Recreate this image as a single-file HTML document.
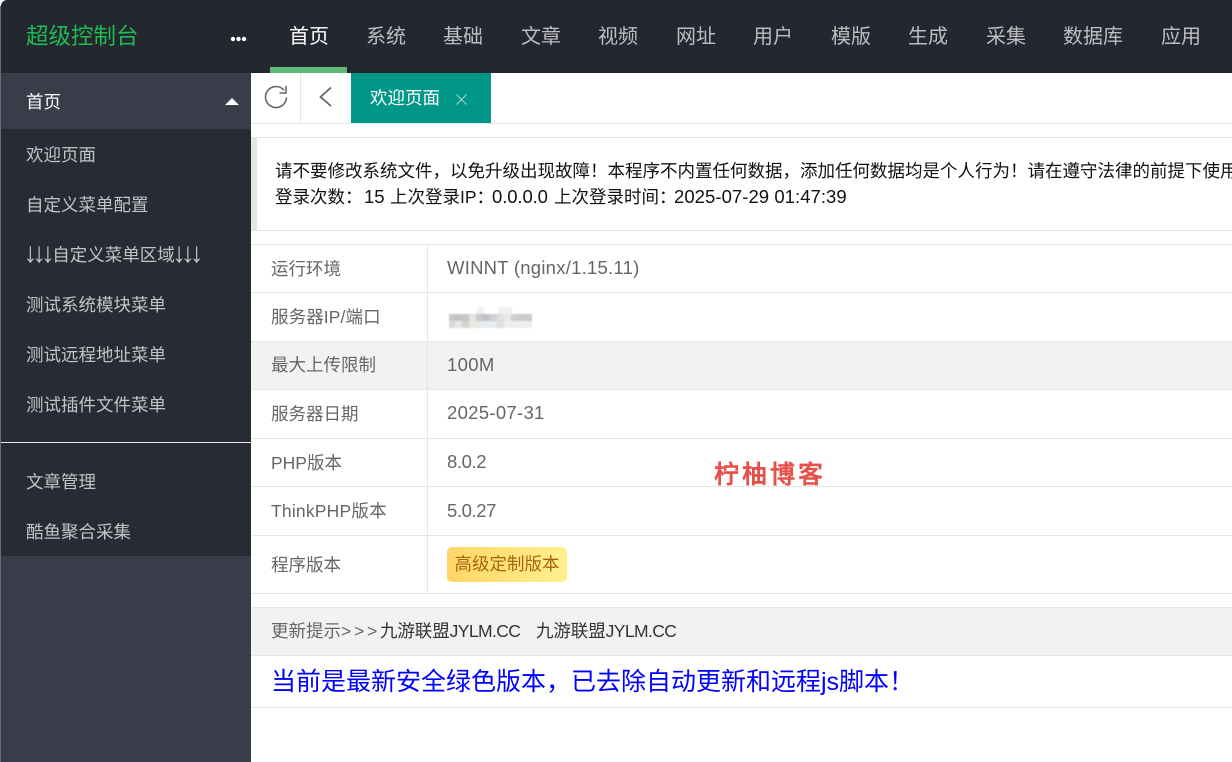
<!DOCTYPE html>
<html lang="zh-CN"><head><meta charset="utf-8"><title>超级控制台</title>
<style>
html,body{margin:0;padding:0;background:#fff}
body{width:1232px;height:762px;overflow:hidden;position:relative;font-family:"Liberation Sans","Noto Sans CJK SC",sans-serif}
.a{position:absolute;white-space:nowrap}
.top{left:1px;top:0;width:1231px;height:73px;background:#252730;border-top-left-radius:6px}
.edge{left:0;top:6px;width:1px;height:756px;background:#6b6d75}
.n{top:0;height:73px;line-height:75px;font-size:20px;color:#bdbec1}
.side{left:1px;top:73px;width:250px;height:689px;background:#393d49}
.sdark{left:1px;top:129px;width:250px;height:427px;background:#282b33}
.s{left:26px;font-size:17.5px;line-height:24px;color:#c2c3c5}
.ar{font-size:28px;line-height:0;letter-spacing:-5.25px;position:relative;left:-2.6px;top:1px}
.h{left:251px;width:981px;height:1px;background:#e6e6e6}
.v{left:427px;width:1px;background:#e6e6e6}
.l{left:271px;font-size:17.5px;line-height:24px;color:#666}
.r{left:447px;font-size:18.5px;line-height:24px;color:#666}
.w{font-size:17.5px;line-height:26px;color:#111}
.d{font-size:18.5px}
</style></head><body>
<div class="a top"></div><div class="a edge"></div>
<div class="a" style="left:26px;top:21px;font-size:22.5px;line-height:32px;color:#1dbb52">超级控制台</div>
<svg class="a" style="left:230px;top:36px" width="17" height="6"><circle cx="3" cy="3" r="2.2" fill="#fff"/><circle cx="8.5" cy="3" r="2.2" fill="#fff"/><circle cx="14" cy="3" r="2.2" fill="#fff"/></svg>
<div class="a n" style="left:289px;color:#fff">首页</div>
<div class="a" style="left:270px;top:67px;width:77px;height:6px;background:#5fb878"></div>
<div class="a n" style="left:366px">系统</div>
<div class="a n" style="left:443px">基础</div>
<div class="a n" style="left:521px">文章</div>
<div class="a n" style="left:598px">视频</div>
<div class="a n" style="left:676px">网址</div>
<div class="a n" style="left:753px">用户</div>
<div class="a n" style="left:831px">模版</div>
<div class="a n" style="left:908px">生成</div>
<div class="a n" style="left:986px">采集</div>
<div class="a n" style="left:1063px">数据库</div>
<div class="a n" style="left:1161px">应用</div>

<div class="a side"></div><div class="a sdark"></div>
<div class="a s" style="top:90px;color:#fff">首页</div>
<svg class="a" style="left:225px;top:98px" width="14" height="7"><path d="M0 7L7 0L14 7Z" fill="#fff"/></svg>
<div class="a s" style="top:143px">欢迎页面</div>
<div class="a s" style="top:193px">自定义菜单配置</div>
<div class="a s" style="top:243px"><span class="ar">↓↓↓</span>自定义菜单区域<span class="ar">↓↓↓</span></div>
<div class="a s" style="top:293px">测试系统模块菜单</div>
<div class="a s" style="top:343px">测试远程地址菜单</div>
<div class="a s" style="top:393px">测试插件文件菜单</div>
<div class="a" style="left:1px;top:442px;width:250px;height:1px;background:#e8e8e8"></div>
<div class="a s" style="top:470px">文章管理</div>
<div class="a s" style="top:520px">酷鱼聚合采集</div>

<div class="a h" style="top:123px"></div>
<div class="a" style="left:300px;top:73px;width:1px;height:50px;background:#e6e6e6"></div>
<svg class="a" style="left:263px;top:84px" width="26" height="26" fill="none" stroke="#666" stroke-width="1.6"><path d="M21 6.2A10.5 10.5 0 1 0 23.5 13.5"/><path d="M23 2V9H16.5"/></svg>
<svg class="a" style="left:318px;top:86px" width="16" height="22" fill="none" stroke="#666" stroke-width="1.8"><path d="M13 1.5L2.5 11L13 20"/></svg>
<div class="a" style="left:351px;top:73px;width:140px;height:50px;background:#009688"></div>
<div class="a" style="left:370px;top:86px;font-size:17.5px;line-height:24px;color:#fff">欢迎页面</div>
<svg class="a" style="left:456px;top:94px" width="11" height="11" stroke="#a5d6d0" stroke-width="1.1"><path d="M0.5 0.5L10.5 10.5M10.5 0.5L0.5 10.5"/></svg>

<div class="a h" style="top:137px"></div>
<div class="a h" style="top:230px"></div>
<div class="a" style="left:251px;top:138px;width:6px;height:92px;background:#e6e6e6"></div>
<div class="a w" style="left:275px;top:158px">请不要修改系统文件，以免升级出现故障！本程序不内置任何数据，添加任何数据均是个人行为！请在遵守法律的前提下使用</div>
<div class="a w" style="left:275px;top:184px">登录次数：</div>
<div class="a w d" style="left:364px;top:184px">15</div>
<div class="a w" style="left:390px;top:184px">上次登录IP：</div>
<div class="a w d" style="left:492px;top:184px;letter-spacing:-.1px">0.0.0.0</div>
<div class="a w" style="left:554px;top:184px">上次登录时间：</div>
<div class="a w d" style="left:674px;top:184px;letter-spacing:.05px">2025-07-29 01:47:39</div>

<div class="a" style="left:251px;top:342px;width:981px;height:47px;background:#f2f2f2"></div>
<div class="a h" style="top:244px"></div>
<div class="a h" style="top:292px"></div>
<div class="a h" style="top:341px"></div>
<div class="a h" style="top:389px"></div>
<div class="a h" style="top:438px"></div>
<div class="a h" style="top:486px"></div>
<div class="a h" style="top:535px"></div>
<div class="a h" style="top:593px"></div>
<div class="a v" style="top:244px;height:349px"></div>

<div class="a l" style="top:257px">运行环境</div>
<div class="a r" style="top:256px;letter-spacing:.24px">WINNT (nginx/1.15.11)</div>
<div class="a l" style="top:305px;letter-spacing:.1px">服务器IP/端口</div>
<svg class="a" style="left:449px;top:307px;filter:blur(.7px)" width="84" height="21">
<g><rect x="0" y="7" width="6" height="7" fill="#c8c8c8"/><rect x="6" y="7" width="7" height="7" fill="#c2c2c4"/><rect x="13" y="7" width="7" height="7" fill="#c6c8c8"/><rect x="20" y="7" width="7" height="7" fill="#e4e4e4"/><rect x="27" y="7" width="7" height="7" fill="#cdcac6"/><rect x="34" y="7" width="7" height="7" fill="#c0c2c8"/><rect x="41" y="7" width="7" height="7" fill="#ced2d8"/><rect x="48" y="7" width="7" height="7" fill="#e2dfdc"/><rect x="55" y="7" width="7" height="7" fill="#e6e8ee"/><rect x="62" y="7" width="7" height="7" fill="#cfcfcf"/><rect x="69" y="7" width="14" height="7" fill="#cbcbcb"/>
<rect x="0" y="14" width="6" height="7" fill="#d8d8d8"/><rect x="6" y="14" width="7" height="7" fill="#e6e6e8"/><rect x="13" y="14" width="7" height="7" fill="#d2d4d4"/><rect x="20" y="14" width="14" height="7" fill="#e8e8e4"/><rect x="34" y="14" width="14" height="7" fill="#e8ecf0"/><rect x="48" y="14" width="7" height="7" fill="#e0e0da"/><rect x="55" y="14" width="28" height="7" fill="#eeeeee"/>
<rect x="28" y="0" width="7" height="7" fill="#efefef"/><rect x="49" y="0" width="14" height="7" fill="#eff0f2"/></g></svg>
<div class="a l" style="top:353px">最大上传限制</div>
<div class="a r" style="top:353px;letter-spacing:.35px">100M</div>
<div class="a l" style="top:402px">服务器日期</div>
<div class="a r" style="top:401px;letter-spacing:.3px">2025-07-31</div>
<div class="a l" style="top:451px">PHP版本</div>
<div class="a r" style="top:450px;letter-spacing:-.4px">8.0.2</div>
<div class="a l" style="top:499px;letter-spacing:.2px">ThinkPHP版本</div>
<div class="a r" style="top:499px;letter-spacing:-.4px">5.0.27</div>
<div class="a l" style="top:553px">程序版本</div>
<div class="a" style="left:447px;top:547px;width:120px;height:35px;border-radius:5px;background:linear-gradient(90deg,#ffd666,#fff08f);color:#a8660c;font-size:17.5px;line-height:35px;text-align:center">高级定制版本</div>

<div class="a" style="left:714px;top:461px;font-size:25px;line-height:28px;letter-spacing:3px;color:#e6504a;-webkit-text-stroke:.5px #e6504a;font-weight:500">柠柚博客</div>

<div class="a" style="left:251px;top:607px;width:981px;height:49px;background:#f2f2f2;border-top:1px solid #e6e6e6;border-bottom:1px solid #e6e6e6;box-sizing:border-box"></div>
<div class="a" style="left:271px;top:619px;font-size:17.5px;line-height:24px;color:#666">更新提示<span style="letter-spacing:2.8px">&gt;&gt;&gt;</span></div>
<div class="a" style="left:380px;top:619px;font-size:17.5px;line-height:24px;color:#333;letter-spacing:-.1px">九游联盟<span style="letter-spacing:-.6px">JYLM.CC</span></div>
<div class="a" style="left:536px;top:619px;font-size:17.5px;line-height:24px;color:#333;letter-spacing:-.1px">九游联盟<span style="letter-spacing:-.6px">JYLM.CC</span></div>
<div class="a" style="left:271px;top:664px;font-size:25px;line-height:36px;color:#00f">当前是最新安全绿色版本，已去除自动更新和远程js脚本！</div>
<div class="a h" style="top:707px"></div>
</body></html>
